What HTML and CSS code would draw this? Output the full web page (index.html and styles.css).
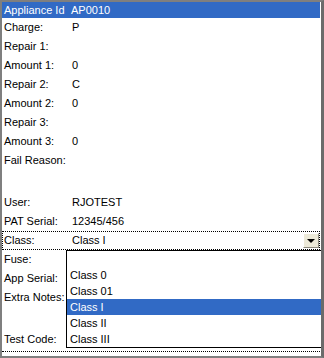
FILE: index.html
```html
<!DOCTYPE html>
<html lang="en">
<head>
    <meta charset="UTF-8">
    <title>Appliance</title>
    <link rel="stylesheet" href="styles.css">
</head>
<body>
    <div class="frame">
        <div class="row head"><span class="label">Appliance Id</span><span class="value">AP0010</span></div>
        <div class="row"><span class="label">Charge:</span><span class="value">P</span></div>
        <div class="row"><span class="label">Repair 1:</span><span class="value"></span></div>
        <div class="row"><span class="label">Amount 1:</span><span class="value">0</span></div>
        <div class="row"><span class="label">Repair 2:</span><span class="value">C</span></div>
        <div class="row"><span class="label">Amount 2:</span><span class="value">0</span></div>
        <div class="row"><span class="label">Repair 3:</span><span class="value"></span></div>
        <div class="row"><span class="label">Amount 3:</span><span class="value">0</span></div>
        <div class="row tall"><span class="label">Fail Reason:</span><span class="value"></span></div>
        <div class="row"><span class="label">User:</span><span class="value">RJOTEST</span></div>
        <div class="row"><span class="label">PAT Serial:</span><span class="value">12345/456</span></div>
        <div class="row focus">
            <span class="label">Class:</span>
            <span class="value">Class I</span>
            <span class="drop-btn"><span class="arrow"></span></span>
        </div>
        <div class="row"><span class="label">Fuse:</span><span class="value"></span></div>
        <div class="row"><span class="label">App Serial:</span><span class="value"></span></div>
        <div class="row tall"><span class="label">Extra Notes:</span><span class="value"></span></div>
        <div class="row last"><span class="label">Test Code:</span><span class="value"></span></div>
        <div class="row next"></div>

        <ul class="drop-list">
            <li></li>
            <li>Class 0</li>
            <li>Class 01</li>
            <li class="selected">Class I</li>
            <li>Class II</li>
            <li>Class III</li>
        </ul>
    </div>
</body>
</html>
```

FILE: styles.css
```css
body {
    margin: 0;
    padding: 0;
    background-color: #ffffff;
    font-family: "Liberation Sans", Arial, sans-serif;
    font-size: 11px;
    color: #000000;
}
.frame {
    position: relative;
    width: 324px;
    height: 358px;
    box-sizing: border-box;
    border-top: 2px solid #7f7f7f;
    border-left: 2px solid #7f7f7f;
    border-right: 3px solid #6b6b6b;
    border-bottom: 2px solid #7f7f7f;
    padding-right: 1px;
    overflow: hidden;
    background-color: #ffffff;
}
.row {
    display: flex;
    height: 19px;
    line-height: 19px;
    box-sizing: border-box;
}
.label {
    width: 67px;
    padding-left: 2px;
    white-space: nowrap;
}
.value {
    flex: 1;
    padding-left: 1px;
    white-space: nowrap;
}
.head {
    height: 16px;
    line-height: 16px;
    background-color: #316ac5;
    color: #ffffff;
}
.head .value {
    padding-left: 0;
}
.tall {
    height: 42px;
}
.tall + .row + .row + .row + .tall {
    height: 43px;
}
.last {
    height: 21px;
}
.focus {
    border: 1px dotted #000000;
    line-height: 17px;
    align-items: flex-start;
}
.focus .label {
    padding-left: 1px;
}
.drop-btn {
    width: 16px;
    height: 15px;
    margin-top: 1px;
    box-sizing: border-box;
    background-color: #ece9d8;
    border-top: 1px solid #ffffff;
    border-left: 1px solid #ffffff;
    border-right: 1px solid #8c8a7f;
    border-bottom: 1px solid #8c8a7f;
    display: flex;
    align-items: center;
    justify-content: center;
}
.arrow {
    width: 0;
    height: 0;
    border-left: 4px solid transparent;
    border-right: 4px solid transparent;
    border-top: 4px solid #000000;
    margin-top: 1px;
}
.next {
    border-top: 1px dotted #000000;
}
.drop-list {
    position: absolute;
    left: 64px;
    top: 248px;
    width: 255px;
    margin: 0;
    padding: 0;
    list-style: none;
    background-color: #ffffff;
    border: 1px solid #000000;
}
.drop-list li {
    height: 16px;
    line-height: 16px;
    padding-left: 3px;
    white-space: nowrap;
}
.drop-list .selected {
    background-color: #316ac5;
    color: #ffffff;
}
```
